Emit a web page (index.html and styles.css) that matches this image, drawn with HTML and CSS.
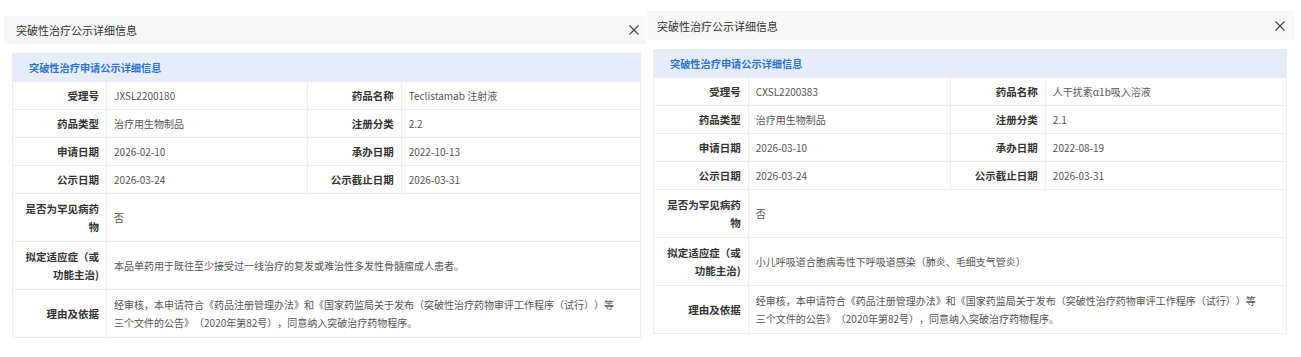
FILE: index.html
```html
<!DOCTYPE html>
<html lang="zh-CN">
<head>
<meta charset="UTF-8" />
<meta name="viewport" content="width=device-width, initial-scale=1" />
<title>突破性治疗公示详细信息</title>
<link rel="stylesheet" href="styles.css">
</head>
<body>

<div class="panels">

  <div class="panel panel-left">
    <div class="panel-head">
      <span class="panel-title">突破性治疗公示详细信息</span>
      <button class="close-btn" aria-label="关闭">
        <svg width="10" height="10" viewBox="0 0 10 10"><path d="M0.5 0.5 L9.5 9.5 M9.5 0.5 L0.5 9.5" stroke="#444" stroke-width="1.1" fill="none"/></svg>
      </button>
    </div>
    <div class="panel-body">
      <div class="info-grid">
        <div class="grid-title">突破性治疗申请公示详细信息</div>

        <div class="cell label">受理号</div>
        <div class="cell value">JXSL2200180</div>
        <div class="cell label">药品名称</div>
        <div class="cell value last">Teclistamab 注射液</div>

        <div class="cell label">药品类型</div>
        <div class="cell value">治疗用生物制品</div>
        <div class="cell label">注册分类</div>
        <div class="cell value last">2.2</div>

        <div class="cell label">申请日期</div>
        <div class="cell value">2026-02-10</div>
        <div class="cell label">承办日期</div>
        <div class="cell value last">2022-10-13</div>

        <div class="cell label">公示日期</div>
        <div class="cell value">2026-03-24</div>
        <div class="cell label">公示截止日期</div>
        <div class="cell value last">2026-03-31</div>

        <div class="cell label tall">是否为罕见病药物</div>
        <div class="cell value wide last">否</div>

        <div class="cell label tall">拟定适应症（或功能主治)</div>
        <div class="cell value wide last">本品单药用于既往至少接受过一线治疗的复发或难治性多发性骨髓瘤成人患者。</div>

        <div class="cell label tall">理由及依据</div>
        <div class="cell value wide last">经审核，本申请符合《药品注册管理办法》和《国家药监局关于发布（突破性治疗药物审评工作程序（试行））等三个文件的公告》（2020年第82号），同意纳入突破治疗药物程序。</div>
      </div>
    </div>
  </div>

  <div class="panel panel-right">
    <div class="panel-head">
      <span class="panel-title">突破性治疗公示详细信息</span>
      <button class="close-btn" aria-label="关闭">
        <svg width="10" height="10" viewBox="0 0 10 10"><path d="M0.5 0.5 L9.5 9.5 M9.5 0.5 L0.5 9.5" stroke="#444" stroke-width="1.1" fill="none"/></svg>
      </button>
    </div>
    <div class="panel-body">
      <div class="info-grid">
        <div class="grid-title">突破性治疗申请公示详细信息</div>

        <div class="cell label">受理号</div>
        <div class="cell value">CXSL2200383</div>
        <div class="cell label">药品名称</div>
        <div class="cell value last">人干扰素α1b吸入溶液</div>

        <div class="cell label">药品类型</div>
        <div class="cell value">治疗用生物制品</div>
        <div class="cell label">注册分类</div>
        <div class="cell value last">2.1</div>

        <div class="cell label">申请日期</div>
        <div class="cell value">2026-03-10</div>
        <div class="cell label">承办日期</div>
        <div class="cell value last">2022-08-19</div>

        <div class="cell label">公示日期</div>
        <div class="cell value">2026-03-24</div>
        <div class="cell label">公示截止日期</div>
        <div class="cell value last">2026-03-31</div>

        <div class="cell label tall">是否为罕见病药物</div>
        <div class="cell value wide last">否</div>

        <div class="cell label tall">拟定适应症（或功能主治)</div>
        <div class="cell value wide last">小儿呼吸道合胞病毒性下呼吸道感染（肺炎、毛细支气管炎）</div>

        <div class="cell label tall">理由及依据</div>
        <div class="cell value wide last">经审核，本申请符合《药品注册管理办法》和《国家药监局关于发布（突破性治疗药物审评工作程序（试行））等三个文件的公告》（2020年第82号），同意纳入突破治疗药物程序。</div>
      </div>
    </div>
  </div>

</div>

</body>
</html>
```

FILE: styles.css
```css
body {
  margin: 0;
  background: #fff;
  color: #333;
  font-family: "Noto Sans CJK SC", "Noto Sans", sans-serif;
  text-spacing-trim: space-all;
}
.panels {
  display: flex;
  align-items: flex-start;
  padding-left: 4px;
}
.panel {
  background: #fff;
}
.panel-left {
  width: 642px;
  margin-top: 16px;
}
.panel-right {
  width: 647px;
  margin-top: 11px;
  margin-left: 1px;
}
.panel-head {
  display: flex;
  align-items: center;
  justify-content: space-between;
  height: 28px;
  background: #f7f7f7;
  padding: 0 7px 0 12px;
}
.panel-right .panel-head {
  height: 29px;
  padding: 0 9px 0 10px;
}
.panel-title {
  font-size: 11px;
  color: #333;
}
.close-btn {
  background: none;
  border: none;
  padding: 0;
  width: 10px;
  height: 10px;
  display: flex;
  cursor: pointer;
}
.panel-body {
  padding: 9px 5px 0 8px;
}
.panel-right .panel-body {
  padding: 9px 7px 0 6px;
}

/* detail grid */
.info-grid {
  display: grid;
  grid-template-columns: 15% 32% 15% 1fr;
  grid-template-rows: 28px repeat(4, 28px) repeat(3, 48px);
  border: 1px solid #ebeef5;
  border-top: none;
}
.grid-title {
  grid-column: 1 / -1;
  display: flex;
  align-items: center;
  background: #e7edf8;
  color: #2e74d6;
  font-weight: bold;
  font-size: 10.2px;
  padding-left: 16px;
}
.cell {
  display: flex;
  align-items: center;
  border-top: 1px solid #ebeef5;
  border-right: 1px solid #ebeef5;
  line-height: 18px;
  min-width: 0;
}
.cell.last {
  border-right: none;
}
.label {
  justify-content: flex-end;
  text-align: right;
  font-weight: bold;
  font-size: 10.5px;
  color: #333;
  padding: 0 7px 0 8px;
}
.value {
  font-size: 10px;
  color: #555;
  padding: 0 8px 0 7px;
}
.value.wide {
  grid-column: 2 / -1;
  padding-right: 18px;
}
.panel-right .value.wide {
  padding-right: 24px;
}
```
